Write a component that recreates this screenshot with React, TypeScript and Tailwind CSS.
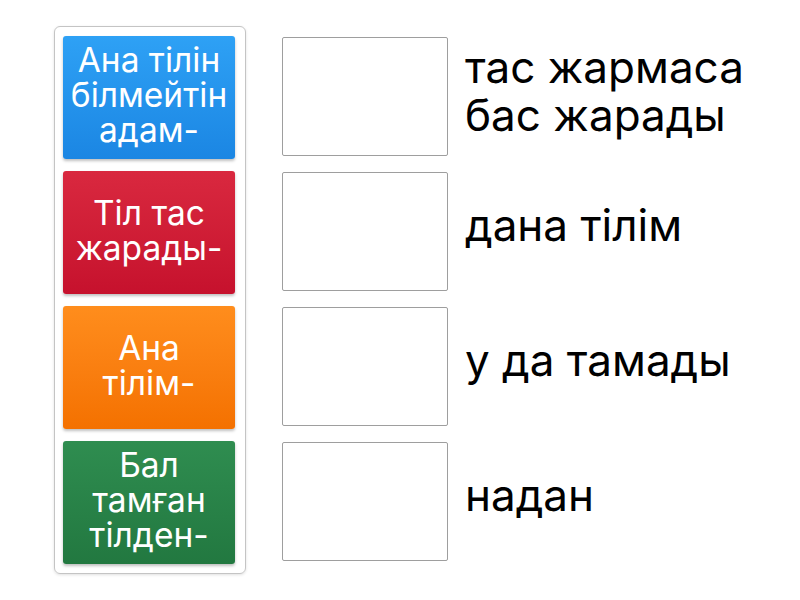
const tiles = [
  { text: "Ана тілін білмейтін адам-", cls: "bg-gradient-to-b from-[#2ea1f5] to-[#1b86e3]" },
  { text: "Тіл тас жарады-", cls: "bg-gradient-to-b from-[#d9283f] to-[#c6112d]" },
  { text: "Ана тілім-", cls: "bg-gradient-to-b from-[#ff8d1c] to-[#f47100]" },
  { text: "Бал тамған тілден-", cls: "bg-gradient-to-b from-[#2f8d50] to-[#227840]" },
];

const answers = [
  { text: "тас жармаса бас жарады", cls: "-mt-[12px]" },
  { text: "дана тілім", cls: "-mt-[14px]" },
  { text: "у да тамады", cls: "-mt-[14px]" },
  { text: "надан", cls: "-mt-[14px]" },
];

export default function App() {
  return (
    <div className="w-[800px] h-[600px] bg-white font-['Inter',sans-serif] flex items-start pl-[54px] pt-[26px]">
      {/* --- TILES --- */}
      <div className="w-[192px] h-[548px] border border-[#c4c4c4] rounded-[6px] shadow-[0_1px_3px_rgba(0,0,0,0.12)] pl-[8px] pt-[9px] flex flex-col gap-[12px]">
        {tiles.map((t) => (
          <div
            key={t.text}
            className={`w-[172px] h-[123px] rounded-[3px] shadow-[0_2px_3px_rgba(0,0,0,0.25)] flex items-center justify-center text-center text-white text-[33.5px] leading-[35px] px-2 pb-[4px] ${t.cls}`}
          >
            {t.text}
          </div>
        ))}
      </div>

      {/* --- SLOTS --- */}
      <div className="ml-[36px] pt-[11px] flex flex-col gap-[16px]">
        {answers.map((a) => (
          <div key={a.text} className="flex items-center h-[119px]">
            <div className="w-[166px] h-[119px] border border-[#9e9e9e] rounded-[2px] bg-white" />
            <div className={`ml-[17px] w-[310px] text-[44px] leading-[48px] text-black ${a.cls}`}>{a.text}</div>
          </div>
        ))}
      </div>
    </div>
  );
}
